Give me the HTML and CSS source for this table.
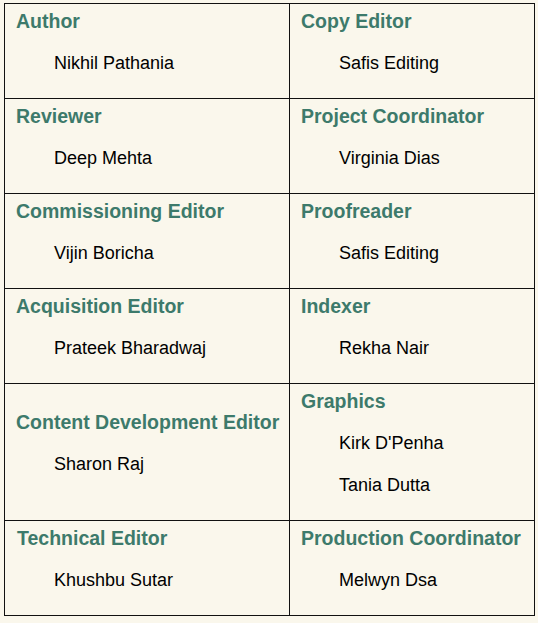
FILE: index.html
```html
<!DOCTYPE html>
<html>
<head>
<meta charset="utf-8">
<link rel="stylesheet" href="styles.css">
</head>
<body>
<table class="credits">
  <colgroup><col class="c1"><col class="c2"></colgroup>
  <tr>
    <td><p class="role">Author</p><p class="name">Nikhil Pathania</p></td>
    <td><p class="role">Copy Editor</p><p class="name">Safis Editing</p></td>
  </tr>
  <tr>
    <td><p class="role">Reviewer</p><p class="name">Deep Mehta</p></td>
    <td><p class="role">Project Coordinator</p><p class="name">Virginia Dias</p></td>
  </tr>
  <tr>
    <td><p class="role">Commissioning Editor</p><p class="name">Vijin Boricha</p></td>
    <td><p class="role">Proofreader</p><p class="name">Safis Editing</p></td>
  </tr>
  <tr>
    <td><p class="role">Acquisition Editor</p><p class="name">Prateek Bharadwaj</p></td>
    <td><p class="role">Indexer</p><p class="name">Rekha Nair</p></td>
  </tr>
  <tr>
    <td><p class="role">Content Development Editor</p><p class="name">Sharon Raj</p></td>
    <td><p class="role">Graphics</p><p class="name">Kirk D'Penha</p><p class="name">Tania Dutta</p></td>
  </tr>
  <tr>
    <td><p class="role role-shift">Technical Editor</p><p class="name">Khushbu Sutar</p></td>
    <td><p class="role">Production Coordinator</p><p class="name">Melwyn Dsa</p></td>
  </tr>
</table>
</body>
</html>
```
FILE: styles.css
```css
html, body {
  margin: 0;
  background: #faf7ec;
}
body {
  padding: 3px 4px;
  font-family: "Liberation Sans", Arial, sans-serif;
  font-size: 18px;
  line-height: 21px;
}
.credits {
  border-collapse: collapse;
  width: 530px;
  table-layout: fixed;
  background: #faf7ec;
}
.c1 { width: 285px; }
.c2 { width: 245px; }
.credits td {
  border: 1px solid #111;
  vertical-align: middle;
  padding: 7px 4px 24px 11px;
  height: 63px;
}
.credits p {
  margin: 0;
  white-space: nowrap;
}
.role {
  font-weight: bold;
  font-size: 19.5px;
  color: #3d7a6b;
}
.role-shift {
  padding-left: 1px;
}
.name {
  color: #000;
  margin-top: 21px !important;
  padding-left: 38px;
}
```
